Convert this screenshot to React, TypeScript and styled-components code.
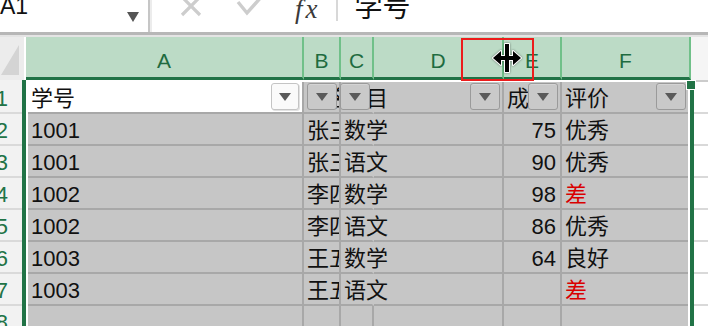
import React from "react";
import styled, { createGlobalStyle } from "styled-components";

const GREEN = "#217346";
const CELL = "#c6c6c6";
const GRID = "#a8a8a8";

const GlobalStyle = createGlobalStyle`
  html, body { margin: 0; padding: 0; background: #ffffff; }
  body {
    width: 708px; height: 326px; overflow: hidden;
    font-family: "Liberation Sans", "Noto Sans CJK SC", sans-serif;
  }
`;

const Page = styled.div`
  position: relative;
  width: 708px;
  height: 326px;
  overflow: hidden;
  background: #fff;
`;

/* ---------- formula bar ---------- */
const FormulaBar = styled.div`
  display: flex;
  align-items: flex-start;
  height: 32px;
  overflow: hidden;
  border-bottom: 3px solid #b7b7b7;
`;

const NameBox = styled.div`
  box-sizing: border-box;
  width: 148px;
  height: 32px;
  display: flex;
  justify-content: space-between;
  align-items: flex-start;
  padding-right: 9px;
`;

const NameText = styled.span`
  font-size: 23px;
  line-height: 22px;
  margin-top: -5px;
  color: #111;
`;

const DropTri = styled.span`
  width: 0;
  height: 0;
  margin-top: 12px;
  border-left: 6px solid transparent;
  border-right: 6px solid transparent;
  border-top: 10px solid #555;
`;

const NameSep = styled.div`
  width: 2px;
  height: 32px;
  background: #c6c6c6;
  border-right: 2px solid #ececec;
`;

const ToolIcon = styled.svg<{ $ml: number; $mt: number }>`
  flex: none;
  margin-left: ${(p) => p.$ml}px;
  margin-top: ${(p) => p.$mt}px;
`;

const Fx = styled.span`
  margin-left: 31px;
  margin-top: -4px;
  font-family: "Liberation Serif", serif;
  font-style: italic;
  font-size: 27px;
  line-height: 27px;
  letter-spacing: 3px;
  color: #3a3a3a;
`;

const FxSep = styled.div`
  width: 2px;
  height: 21px;
  margin-left: 15px;
  background: #d8d8d8;
`;

const FormulaText = styled.span`
  margin-left: 17px;
  margin-top: -9px;
  font-family: "Noto Sans CJK SC", sans-serif;
  font-size: 28px;
  line-height: 28px;
  color: #111;
`;

/* ---------- column headers ---------- */
const HeaderRow = styled.div`
  display: flex;
  height: 43px;
  border-top: 2px solid #e4e4e4;
`;

const Corner = styled.div`
  width: 24px;
  height: 43px;
  background: #ececec;
  border-right: 2px solid #ffffff;
`;

const ColHead = styled.div<{ $w: number }>`
  box-sizing: border-box;
  width: ${(p) => p.$w}px;
  height: 43px;
  flex: none;
  background: #bcdbc6;
  border-right: 2px solid #70c089;
  border-bottom: 3px solid ${GREEN};
  color: #1f6b40;
  font-size: 21px;
  line-height: 32px;
  padding-top: 8px;
  text-align: center;
`;

const HeaderFill = styled.div`
  flex: 1;
  height: 43px;
  background: #f5f5f5;
`;

/* ---------- body ---------- */
const Body = styled.div`
  display: flex;
`;

const RowHeads = styled.div`
  width: 22px;
  flex: none;
  display: flex;
  flex-direction: column;
`;

const RowHead = styled.div<{ $first?: boolean }>`
  box-sizing: border-box;
  height: ${(p) => (p.$first ? 34 : 32)}px;
  padding-top: ${(p) => (p.$first ? 6 : 4)}px;
  padding-right: 14px;
  line-height: 26px;
  font-size: 22px;
  color: ${GREEN};
  text-align: right;
  background: #f2f2f2;
  border-bottom: 2px solid #dadada;
  overflow: hidden;
  white-space: nowrap;
  display: flex;
  justify-content: flex-end;
`;

const SelectionFrame = styled.div`
  flex: none;
  border-left: 4px solid ${GREEN};
  border-right: 4px solid ${GREEN};
`;

const SelectionInner = styled.div`
  border: 2px solid #ffffff;
  border-bottom: 0;
  background: ${CELL};
`;

const SheetRow = styled.div`
  display: flex;
`;

const Cell = styled.div<{
  $w: number;
  $align?: "left" | "right";
  $white?: boolean;
  $spill?: boolean;
  $last?: boolean;
  $red?: boolean;
}>`
  box-sizing: border-box;
  position: relative;
  flex: none;
  width: ${(p) => p.$w}px;
  height: 32px;
  padding: 4px 4px 0 3px;
  line-height: 26px;
  font-size: 22px;
  white-space: nowrap;
  text-align: ${(p) => p.$align ?? "left"};
  color: ${(p) => (p.$red ? "#d90000" : "#111")};
  background: ${(p) => (p.$white ? "#ffffff" : CELL)};
  border-bottom: 2px solid ${GRID};
  border-right: ${(p) =>
    p.$last ? "0" : `2px solid ${p.$spill ? CELL : GRID}`};
  overflow: ${(p) => (p.$spill ? "visible" : "hidden")};
  z-index: ${(p) => (p.$spill ? 1 : "auto")};
`;

const FilterButton = styled.div<{ $light?: boolean }>`
  position: absolute;
  top: 1px;
  right: ${(p) => (p.$light ? 3 : 2)}px;
  box-sizing: border-box;
  width: ${(p) => (p.$light ? 28 : 30)}px;
  height: 27px;
  display: flex;
  align-items: center;
  justify-content: center;
  border-radius: 3px;
  border: 1px solid ${(p) => (p.$light ? "#c4c4c4" : "#9a9a9a")};
  background: ${(p) => (p.$light ? "#fafafa" : "#c9c9c9")};
  box-shadow: ${(p) =>
    p.$light ? "1px 1px 0 #e2e2e2" : "inset 0 1px 0 #d4d4d4"};
`;

const FilterTri = styled.span`
  width: 0;
  height: 0;
  border-left: 6px solid transparent;
  border-right: 6px solid transparent;
  border-top: 8px solid #5a5a5a;
`;

const RightFill = styled.div`
  flex: 1;
  display: flex;
  flex-direction: column;
`;

const FillRow = styled.div<{ $first?: boolean }>`
  height: 30px;
  border-top: ${(p) => (p.$first ? "2px solid #cccccc" : "0")};
  border-bottom: 2px solid #d9d9d9;
`;

/* ---------- overlays ---------- */
const RedBox = styled.div`
  position: absolute;
  left: 461px;
  top: 38px;
  width: 73px;
  height: 43px;
  box-sizing: border-box;
  border: 2.5px solid #ec1c1c;
`;

const FillHandle = styled.div`
  position: absolute;
  left: 686px;
  top: 80px;
  width: 8px;
  height: 8px;
  background: ${GREEN};
  border: 1px solid #ffffff;
`;

const Cursor = styled.svg`
  position: absolute;
  left: 491px;
  top: 42px;
  filter: drop-shadow(0 0 1px rgba(0, 0, 0, 0.45));
`;

/* ---------- data ---------- */
const HEAD = [
  { l: "A", w: 278 },
  { l: "B", w: 37 },
  { l: "C", w: 33 },
  { l: "D", w: 130 },
  { l: "E", w: 58 },
  { l: "F", w: 129 },
];

const COLW = [276, 37, 33, 130, 58, 126];

type CellData = { t: string; red?: boolean };

const TITLE = ["学号", "姓名", "科目", "", "成绩", "评价"];

const DATA: CellData[][] = [
  [{ t: "1001" }, { t: "张三" }, { t: "数学" }, { t: "" }, { t: "75" }, { t: "优秀" }],
  [{ t: "1001" }, { t: "张三" }, { t: "语文" }, { t: "" }, { t: "90" }, { t: "优秀" }],
  [{ t: "1002" }, { t: "李四" }, { t: "数学" }, { t: "" }, { t: "98" }, { t: "差", red: true }],
  [{ t: "1002" }, { t: "李四" }, { t: "语文" }, { t: "" }, { t: "86" }, { t: "优秀" }],
  [{ t: "1003" }, { t: "王五" }, { t: "数学" }, { t: "" }, { t: "64" }, { t: "良好" }],
  [{ t: "1003" }, { t: "王五" }, { t: "语文" }, { t: "" }, { t: "" }, { t: "差", red: true }],
];

export default function App() {
  return (
    <Page>
      <GlobalStyle />
      <FormulaBar>
        <NameBox>
          <NameText>A1</NameText>
          <DropTri />
        </NameBox>
        <NameSep />
        <ToolIcon $ml={28} $mt={-5} width="22" height="22" viewBox="0 0 22 22">
          <path d="M2 2 L20 20 M20 2 L2 20" stroke="#cdcdcd" strokeWidth="3.2" fill="none" />
        </ToolIcon>
        <ToolIcon $ml={34} $mt={-6} width="28" height="22" viewBox="0 0 28 22">
          <path d="M2 8 L11 19 L27 1" stroke="#cdcdcd" strokeWidth="3.4" fill="none" />
        </ToolIcon>
        <Fx>fx</Fx>
        <FxSep />
        <FormulaText>学号</FormulaText>
      </FormulaBar>

      <HeaderRow>
        <Corner>
          <svg width="24" height="43" viewBox="0 0 24 43">
            <polygon points="19,8 19,38 1,38" fill="#d4d4d4" />
          </svg>
        </Corner>
        {HEAD.map((h) => (
          <ColHead key={h.l} $w={h.w}>
            {h.l}
          </ColHead>
        ))}
        <HeaderFill />
      </HeaderRow>

      <Body>
        <RowHeads>
          {[1, 2, 3, 4, 5, 6, 7, 8].map((n) => (
            <RowHead key={n} $first={n === 1}>
              {n}
            </RowHead>
          ))}
        </RowHeads>

        <SelectionFrame>
          <SelectionInner>
            <SheetRow>
              {TITLE.map((t, i) => (
                <Cell
                  key={i}
                  $w={COLW[i]}
                  $white={i === 0}
                  $spill={i === 2}
                  $last={i === 5}
                >
                  {t}
                  <FilterButton $light={i === 0}>
                    <FilterTri />
                  </FilterButton>
                </Cell>
              ))}
            </SheetRow>
            {DATA.map((row, r) => (
              <SheetRow key={r}>
                {row.map((c, i) => (
                  <Cell
                    key={i}
                    $w={COLW[i]}
                    $align={i === 4 ? "right" : "left"}
                    $spill={i === 2}
                    $last={i === 5}
                    $red={c.red}
                  >
                    {c.t}
                  </Cell>
                ))}
              </SheetRow>
            ))}
            <SheetRow>
              {COLW.map((w, i) => (
                <Cell key={i} $w={w} $last={i === 5} />
              ))}
            </SheetRow>
          </SelectionInner>
        </SelectionFrame>

        <RightFill>
          {[0, 1, 2, 3, 4, 5, 6, 7].map((n) => (
            <FillRow key={n} $first={n === 0} />
          ))}
        </RightFill>
      </Body>

      <RedBox />
      <FillHandle />
      <Cursor width="32" height="32" viewBox="0 0 32 32">
        <path
          d="M14 2 H18 V14 H22 V9 L30 16 L22 23 V18 H18 V30 H14 V18 H10 V23 L2 16 L10 9 V14 H14 Z"
          fill="#000"
          stroke="#fff"
          strokeWidth="2"
          strokeLinejoin="round"
          paintOrder="stroke"
        />
      </Cursor>
    </Page>
  );
}
